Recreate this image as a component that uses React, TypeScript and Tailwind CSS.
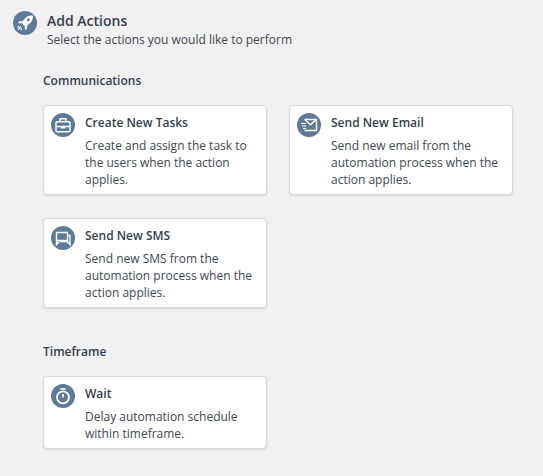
import type { ReactNode } from "react";

const IconCircle = ({ children, size }: { children: ReactNode; size: string }) => (
  <div className={`${size} shrink-0 rounded-full bg-[#5d7a99] flex items-center justify-center`}>
    <svg viewBox="0 0 24 24" fill="none" stroke="white" strokeWidth="1.4" className="w-full h-full">
      {children}
    </svg>
  </div>
);

const Rocket = () => (
  <>
    <path d="M20 4.500c-4.500-.3-7.500 1.500-9.800 5L8.500 12l3.700 3.700 2.500-1.700c3.500-2.300 5.500-5 5.300-9.500z" fill="white" stroke="none" />
    <circle cx="15.400" cy="8.800" r="1.500" fill="#5d7a99" stroke="none" />
    <path d="M10 9.800l-3.500.4L4.800 12l3 .6zM14.400 14l-.4 3.500-1.800 1.700-.6-3z" fill="white" stroke="none" />
    <path d="M8 15.500l-3 3M6 15l-1.500 1.500M9 17.500L7.500 19" strokeWidth="1.100" />
  </>
);

const Briefcase = () => (
  <>
    <rect x="5" y="8.700" width="14" height="10" rx="1" />
    <path d="M9 8.700V5.800h6v2.900M5 13.500h14M10.500 13.500v1.300h3v-1.300" />
  </>
);

const Mail = () => (
  <>
    <path d="M7.500 6.500H19.500v11H7.500" />
    <path d="M8 6.800l5.500 5 5.500-5" />
    <path d="M4 10.500h5M5 13h4M6 15.500h3" strokeWidth="1.200" />
  </>
);

const Chat = () => (
  <>
    <path d="M5.500 6.500h11v8h-11z" />
    <path d="M16.500 9.500h2.500v9l-3-3H9.500" />
    <path d="M5.500 14.500v4l3-3" />
  </>
);

const Stopwatch = () => (
  <>
    <circle cx="12" cy="13.300" r="6" strokeWidth="1.800" />
    <path d="M9.300 5h5.400M12 13.500V10" strokeWidth="1.600" />
  </>
);

const ActionCard = ({ icon, title, text }: { icon: ReactNode; title: string; text: string }) => (
  <div className="w-[224px] bg-white rounded border border-[#d9d9d9] shadow-[0_1px_2px_rgba(0,0,0,0.12)] pl-[7px] pr-2 pt-[7px] pb-[6px] flex gap-[10px]">
    <IconCircle size="w-6 h-6">{icon}</IconCircle>
    <div className="min-w-0">
      <div className="text-[12px] leading-[20px] font-semibold text-[#333f4d]">{title}</div>
      <p className="text-[12px] leading-[17px] text-[#3d4754] mt-[4px]">{text}</p>
    </div>
  </div>
);

export default function App() {
  return (
    <div className="min-h-[476px] bg-[#f1f1f1] font-['Open_Sans',sans-serif] pt-[11px] overflow-hidden">
      <div className="flex gap-[10px] pl-[13px]">
        <IconCircle size="w-6 h-6"><Rocket /></IconCircle>
        <div className="mt-[1px]">
          <div className="text-[14px] leading-[18px] font-semibold text-[#333f4d]">Add Actions</div>
          <div className="text-[12px] leading-[17px] text-[#3d4754] mt-[1px]">Select the actions you would like to perform</div>
        </div>
      </div>

      <div className="pl-[43px] mt-[24px]">
        <div className="text-[12px] leading-[17px] font-semibold text-[#333f4d]">Communications</div>
        <div className="grid grid-cols-[224px_224px] gap-x-[22px] gap-y-[23px] mt-[16px]">
          <ActionCard icon={<Briefcase />} title="Create New Tasks" text="Create and assign the task to the users when the action applies." />
          <ActionCard icon={<Mail />} title="Send New Email" text="Send new email from the automation process when the action applies." />
          <ActionCard icon={<Chat />} title="Send New SMS" text="Send new SMS from the automation process when the action applies." />
        </div>

        <div className="text-[12px] leading-[17px] font-semibold text-[#333f4d] mt-[35px]">Timeframe</div>
        <div className="mt-[16px]">
          <ActionCard icon={<Stopwatch />} title="Wait" text="Delay automation schedule within timeframe." />
        </div>
      </div>
    </div>
  );
}
